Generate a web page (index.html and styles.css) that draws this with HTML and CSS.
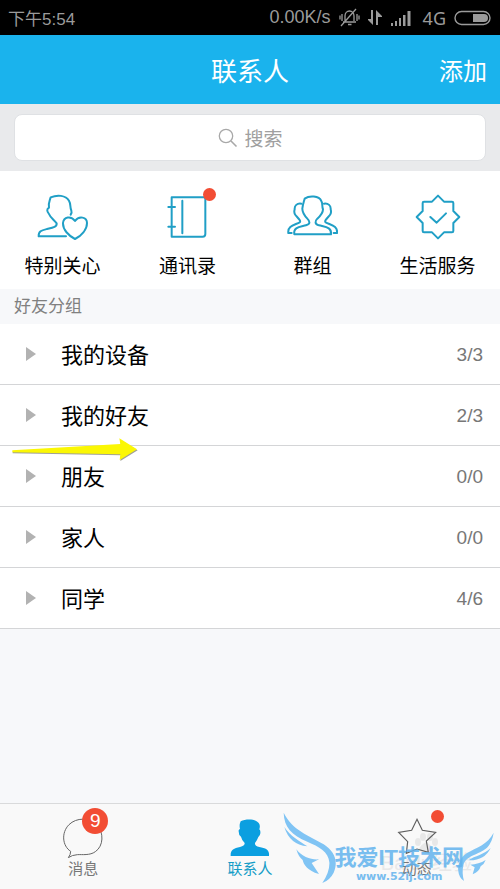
FILE: index.html
```html
<!DOCTYPE html>
<html lang="zh-CN">
<head>
<meta charset="utf-8">
<meta name="viewport" content="width=device-width, initial-scale=1">
<title>联系人</title>
<link rel="stylesheet" href="styles.css">
</head>
<body>
<div class="status">
  <span class="status-time">下午5:54</span>
  <div class="status-right">
    <span>0.00K/s</span>
    <svg class="status-icons" width="76" height="20" viewBox="0 0 76 20" aria-hidden="true">
      <g fill="none" stroke="#9b9b9b" stroke-width="1.3">
        <path d="M4 14H17M6 13V8C6 5 8 3 10.500 3S15 5 15 8V13M2 18L17 1M9 16.500H12.500"/>
        <path d="M3 6V13M1 7.500V11.500M18 6V13M20 7.500V11.500"/>
      </g>
      <g fill="#9b9b9b">
        <path d="M32 2H34V17L29 12V11H32ZM37 17H39V9H43V8L37 2Z"/>
        <path d="M52 15h2v3h-2zM56 13h2v5h-2zM60 10h2v8h-2zM64 7h2.500v11H64zM68.500 3h3v15h-3z"/>
      </g>
    </svg>
    <span class="network">4G</span>
    <svg width="38" height="16" viewBox="0 0 38 16" aria-hidden="true">
      <rect x="1" y="1.500" width="35" height="13" rx="6.500" fill="none" stroke="#9b9b9b" stroke-width="1.400"/>
      <path d="M19 4H30a4 4 0 0 1 0 8H19Z" fill="#9b9b9b"/>
    </svg>
  </div>
</div>
<header class="header">
  <h1>联系人</h1>
  <button class="add" type="button">添加</button>
</header>
<div class="search-area">
  <label class="search">
    <svg width="20" height="20" viewBox="0 0 20 20" aria-hidden="true"><g fill="none" stroke="#a8a8a8" stroke-width="1.300"><circle cx="8" cy="8" r="6.700"/><path d="M13 13L18.500 18.500" stroke-width="1.600"/></g></svg>
    <input type="text" placeholder="搜索" aria-label="搜索">
  </label>
</div>
<nav class="shortcuts">
  <a href="#care">
    <span class="shortcut-icon"><svg viewBox="110 264 153 141" aria-hidden="true"><path d="M197 394H115C114 378 124 376 140 372C158 368 170 366 169 355C161 345 150 338 146 327C139 318 139 312 146 308C143 295 148 288 151 277C170 269 196 270 206 287C212 297 208 304 213 317C215 322 213 326 211 329"/><path d="M224 402C205 392 187 374 188 354C190 335 212 331 224 348C236 331 260 336 260 354C260 374 243 392 224 402Z"/></svg></span>
    <span>特别关心</span>
  </a>
  <a href="#book">
    <span class="shortcut-icon"><svg viewBox="486 264 153 141" aria-hidden="true"><path d="M515 277H611Q616 277 616 282V387Q616 395 608 395H515ZM547 287V385M505 306H525M505 365H525"/></svg><i class="dot dot-book"></i></span>
    <span>通讯录</span>
  </a>
  <a href="#groups">
    <span class="shortcut-icon"><svg viewBox="111 264 153 141" aria-hidden="true"><path d="M133 388C129 366 150 366 168 361C182 357 180 349 172 341C164 332 157 322 157 311C158 300 160 295 164 281C178 271 207 272 214 288C219 297 215 302 219 313C219 325 210 334 202 341C194 349 194 357 207 361C225 366 246 366 243 388Z"/><path d="M154 296C141 294 133 302 134 313C132 320 131 325 137 331C145 340 154 348 149 352C135 360 112 362 115 384H125M222 296C235 294 243 302 242 313C244 320 245 325 239 331C231 340 222 348 227 352C241 360 264 362 261 384H251"/></svg></span>
    <span>群组</span>
  </a>
  <a href="#services">
    <span class="shortcut-icon"><svg viewBox="486 264 153 141" aria-hidden="true"><path d="M564 272L582 290H606Q610 290 610 294V318L628 336L610 354V378Q610 382 606 382H582L564 400L546 382H522Q518 382 518 378V354L500 336L518 318V294Q518 290 522 290H546ZM541 336L560 353L588 325"/></svg></span>
    <span>生活服务</span>
  </a>
</nav>
<h2 class="section-title">好友分组</h2>
<main class="content">
  <ul class="groups">
    <li><button type="button"><i class="triangle"></i><span class="name">我的设备</span><span class="count">3/3</span></button></li>
    <li><button type="button"><i class="triangle"></i><span class="name">我的好友</span><span class="count">2/3</span></button></li>
    <li><button type="button"><i class="triangle"></i><span class="name">朋友</span><span class="count">0/0</span></button></li>
    <li><button type="button"><i class="triangle"></i><span class="name">家人</span><span class="count">0/0</span></button></li>
    <li><button type="button"><i class="triangle"></i><span class="name">同学</span><span class="count">4/6</span></button></li>
  </ul>
  <svg class="arrow" viewBox="33 336 384 75" aria-hidden="true">
    <path d="M38 380L363 361L360 344L413 376L361 408L363 391L38 385Z" fill="#77776a" opacity=".7"/>
    <path d="M37 376L361 357L358 340L411 373L359 405L361 388L37 382Z" fill="#fbf704"/>
  </svg>
</main>
<footer class="tabbar">
  <nav class="tabs">
    <a href="#messages">
      <span class="tab-icon"><svg viewBox="183 84 144 120" aria-hidden="true"><path d="M211 203Q218 194 218 184C193 168 189 128 213 104C235 82 275 82 297 104C318 128 317 168 292 185C276 197 252 193 238 194Q222 195 211 203Z" fill="none" stroke="#666" stroke-width="3"/></svg><b class="badge">9</b></span>
      <span>消息</span>
    </a>
    <a href="#contacts" class="active">
      <span class="tab-icon"><svg viewBox="19 24 144 120" aria-hidden="true"><path d="M33 138C32 119 42 115 61 111Q76 108 75 99Q67 92 64 80Q56 75 57 61L61 56Q58 45 63 34C79 26 112 26 119 42Q122 49 119 58C125 64 122 77 116 81Q112 92 106 99Q105 108 119 111C139 115 150 119 148 138Z" fill="#0b9fe0"/></svg></span>
      <span>联系人</span>
    </a>
    <a href="#feed">
      <span class="tab-icon"><svg viewBox="368 84 144 120" aria-hidden="true"><path d="M440 88L456 121L496 127L468 153L474 187L440 177L408 190L412 155L385 127L424 121Z" fill="none" stroke="#5f5f5f" stroke-width="3.500"/></svg><i class="dot dot-feed"></i></span>
      <span>动态</span>
    </a>
  </nav>
  <div class="stamp">
    <svg width="24" height="20" viewBox="0 0 24 20" aria-hidden="true"><g fill="#e8e8e8"><ellipse cx="4" cy="9" rx="3" ry="4"/><ellipse cx="9" cy="4" rx="3" ry="4"/><ellipse cx="16" cy="4" rx="3" ry="4"/><ellipse cx="21" cy="9" rx="3" ry="4"/><path d="M12 9Q18 12 19 17Q16 21 12 18Q8 21 5 17Q6 12 12 9Z"/></g></svg>
    <span>Baidu经验</span>
  </div>
  <div class="watermark">
    <svg width="55" height="75" viewBox="40 64 165 225" aria-hidden="true"><g fill="#80c4f4"><path d="M42 69C70 125 118 136 162 164C194 184 207 215 192 249Q181 271 158 280Q181 246 179 218C177 186 148 171 113 156C66 136 43 112 42 69Z"/><path d="M44 112C62 140 91 155 113 170Q60 165 44 112Z"/><path d="M80 179C97 202 125 211 148 209L126 220L148 253C113 243 102 225 99 211Q86 201 80 179Z"/></g></svg>
    <div class="watermark-text"><strong>我爱IT技术网</strong><em>www.52ij.com</em></div>
    <svg class="wing-right" width="38" height="50" viewBox="558 120 114 150" aria-hidden="true"><g fill="#80c4f4"><path d="M671 122C653 158 618 167 591 183C571 195 562 220 565 238Q567 258 582 267Q575 244 580 220C588 188 625 190 651 167Q667 150 671 122Z"/><path d="M662 168C643 188 615 191 595 205Q643 207 662 168Z"/><path d="M647 204Q626 217 601 218L614 226L608 247Q628 239 632 223Q643 216 647 204Z"/></g></svg>
  </div>
</footer>
</body>
</html>
```
FILE: styles.css
```css
* {
  box-sizing: border-box;
}

body {
  margin: 0;
  min-height: 100vh;
  display: flex;
  flex-direction: column;
  background: #f7f8fa;
  color: #000;
  font-family: "Liberation Sans", "Noto Sans CJK SC", sans-serif;
}

button {
  border: 0;
  padding: 0;
  background: none;
  color: inherit;
  font: inherit;
}

a {
  color: inherit;
  text-decoration: none;
}

svg {
  display: block;
  flex: none;
}

.status {
  display: flex;
  justify-content: space-between;
  align-items: center;
  height: 35px;
  padding: 0 8px;
  background: #000;
  color: #9b9b9b;
  font-size: 18px;
}

.status-time {
  font-size: 17px;
}

.status-right {
  display: flex;
  align-items: center;
}

.status-icons {
  margin: 0 8px;
}

.network {
  margin-right: 8px;
  font-family: "Noto Sans", sans-serif;
}

.header {
  display: grid;
  grid-template-columns: 1fr auto 1fr;
  align-items: center;
  height: 69px;
  padding: 0 13px;
  background: #1ab3ed;
  color: #fff;
}

.header h1 {
  grid-column: 2;
  margin: 0;
  font-size: 26px;
  font-weight: 400;
}

.add {
  justify-self: end;
  font-size: 24px;
}

.search-area {
  padding: 10px 14px;
  background: #e9eaec;
}

.search {
  display: flex;
  justify-content: center;
  align-items: center;
  gap: 7px;
  height: 47px;
  border: 1px solid #dfe1e4;
  border-radius: 8px;
  background: #fff;
}

.search input {
  width: 38px;
  padding: 4px 0 0;
  border: 0;
  outline: 0;
  background: none;
  font-family: inherit;
  font-size: 19px;
}

.search input::placeholder {
  color: #a0a0a0;
}

.shortcuts {
  display: grid;
  grid-template-columns: repeat(4, 1fr);
  height: 118px;
  padding-top: 22px;
  background: #fff;
  font-size: 19px;
  line-height: 28px;
}

.shortcuts a {
  display: flex;
  flex-direction: column;
  align-items: center;
  gap: 13px;
}

.shortcut-icon {
  position: relative;
}

.shortcut-icon svg {
  width: 51px;
  height: 47px;
  fill: none;
  stroke: #209fc6;
  stroke-width: 6;
  stroke-linecap: round;
  stroke-linejoin: round;
}

.dot {
  position: absolute;
  width: 13px;
  height: 13px;
  border-radius: 50%;
  background: #f24d34;
}

.dot-book {
  top: -5px;
  right: -3px;
}

.dot-feed {
  top: -8px;
  right: -3px;
}

.section-title {
  margin: 0;
  padding: 1px 0 0 14px;
  color: #808080;
  font-size: 17px;
  font-weight: 400;
  line-height: 34px;
}

.content {
  position: relative;
  flex: 1;
}

.groups {
  margin: 0;
  padding: 0;
  list-style: none;
  background: #fff;
}

.groups li {
  border-bottom: 1px solid #d4d5d7;
}

.groups button {
  display: flex;
  align-items: center;
  width: 100%;
  height: 60px;
  padding: 0 17px 0 26px;
  text-align: left;
}

.triangle {
  border-left: 10px solid #b2b2b2;
  border-top: 7px solid transparent;
  border-bottom: 7px solid transparent;
}

.name {
  flex: 1;
  margin-left: 25px;
  padding-bottom: 3px;
  font-size: 22px;
}

.count {
  padding-top: 2px;
  color: #777;
  font-size: 19px;
}

.arrow {
  position: absolute;
  top: 113px;
  left: 11px;
  width: 128px;
  height: 25px;
}

.tabbar {
  position: relative;
  height: 86px;
  border-top: 1px solid #d9dadb;
  background: #f9f9f9;
}

.tabs {
  position: relative;
  z-index: 1;
  display: grid;
  grid-template-columns: repeat(3, 1fr);
  padding-top: 14px;
  color: #777;
  font-size: 15px;
  line-height: 20px;
}

.tabs a {
  display: flex;
  flex-direction: column;
  align-items: center;
  gap: 1px;
}

.tabs .active {
  color: #159dc7;
}

.tab-icon {
  position: relative;
}

.tab-icon svg {
  width: 48px;
  height: 40px;
}

.badge {
  position: absolute;
  top: -10px;
  right: -1px;
  width: 26px;
  height: 26px;
  border-radius: 50%;
  background: #f24d34;
  color: #fff;
  font-size: 19px;
  font-weight: 400;
  line-height: 26px;
  text-align: center;
}

.stamp {
  position: absolute;
  right: 28px;
  bottom: 16px;
  display: flex;
  flex-direction: column;
  align-items: center;
  color: #e8e8e8;
  font-size: 20px;
  line-height: 20px;
}

.watermark {
  position: absolute;
  right: 6px;
  bottom: 3px;
  z-index: 2;
  display: flex;
  align-items: flex-end;
  color: #62b3ee;
  pointer-events: none;
}

.watermark-text {
  display: flex;
  flex-direction: column;
  align-items: center;
  margin: 0 -8px 3px -4px;
  opacity: 0.85;
}

.wing-right {
  margin-bottom: 4px;
}

.watermark strong {
  font-size: 22px;
  line-height: 24px;
}

.watermark em {
  font-family: "DejaVu Sans", sans-serif;
  font-size: 11px;
  font-style: normal;
  font-weight: 700;
  line-height: 13px;
}
```
